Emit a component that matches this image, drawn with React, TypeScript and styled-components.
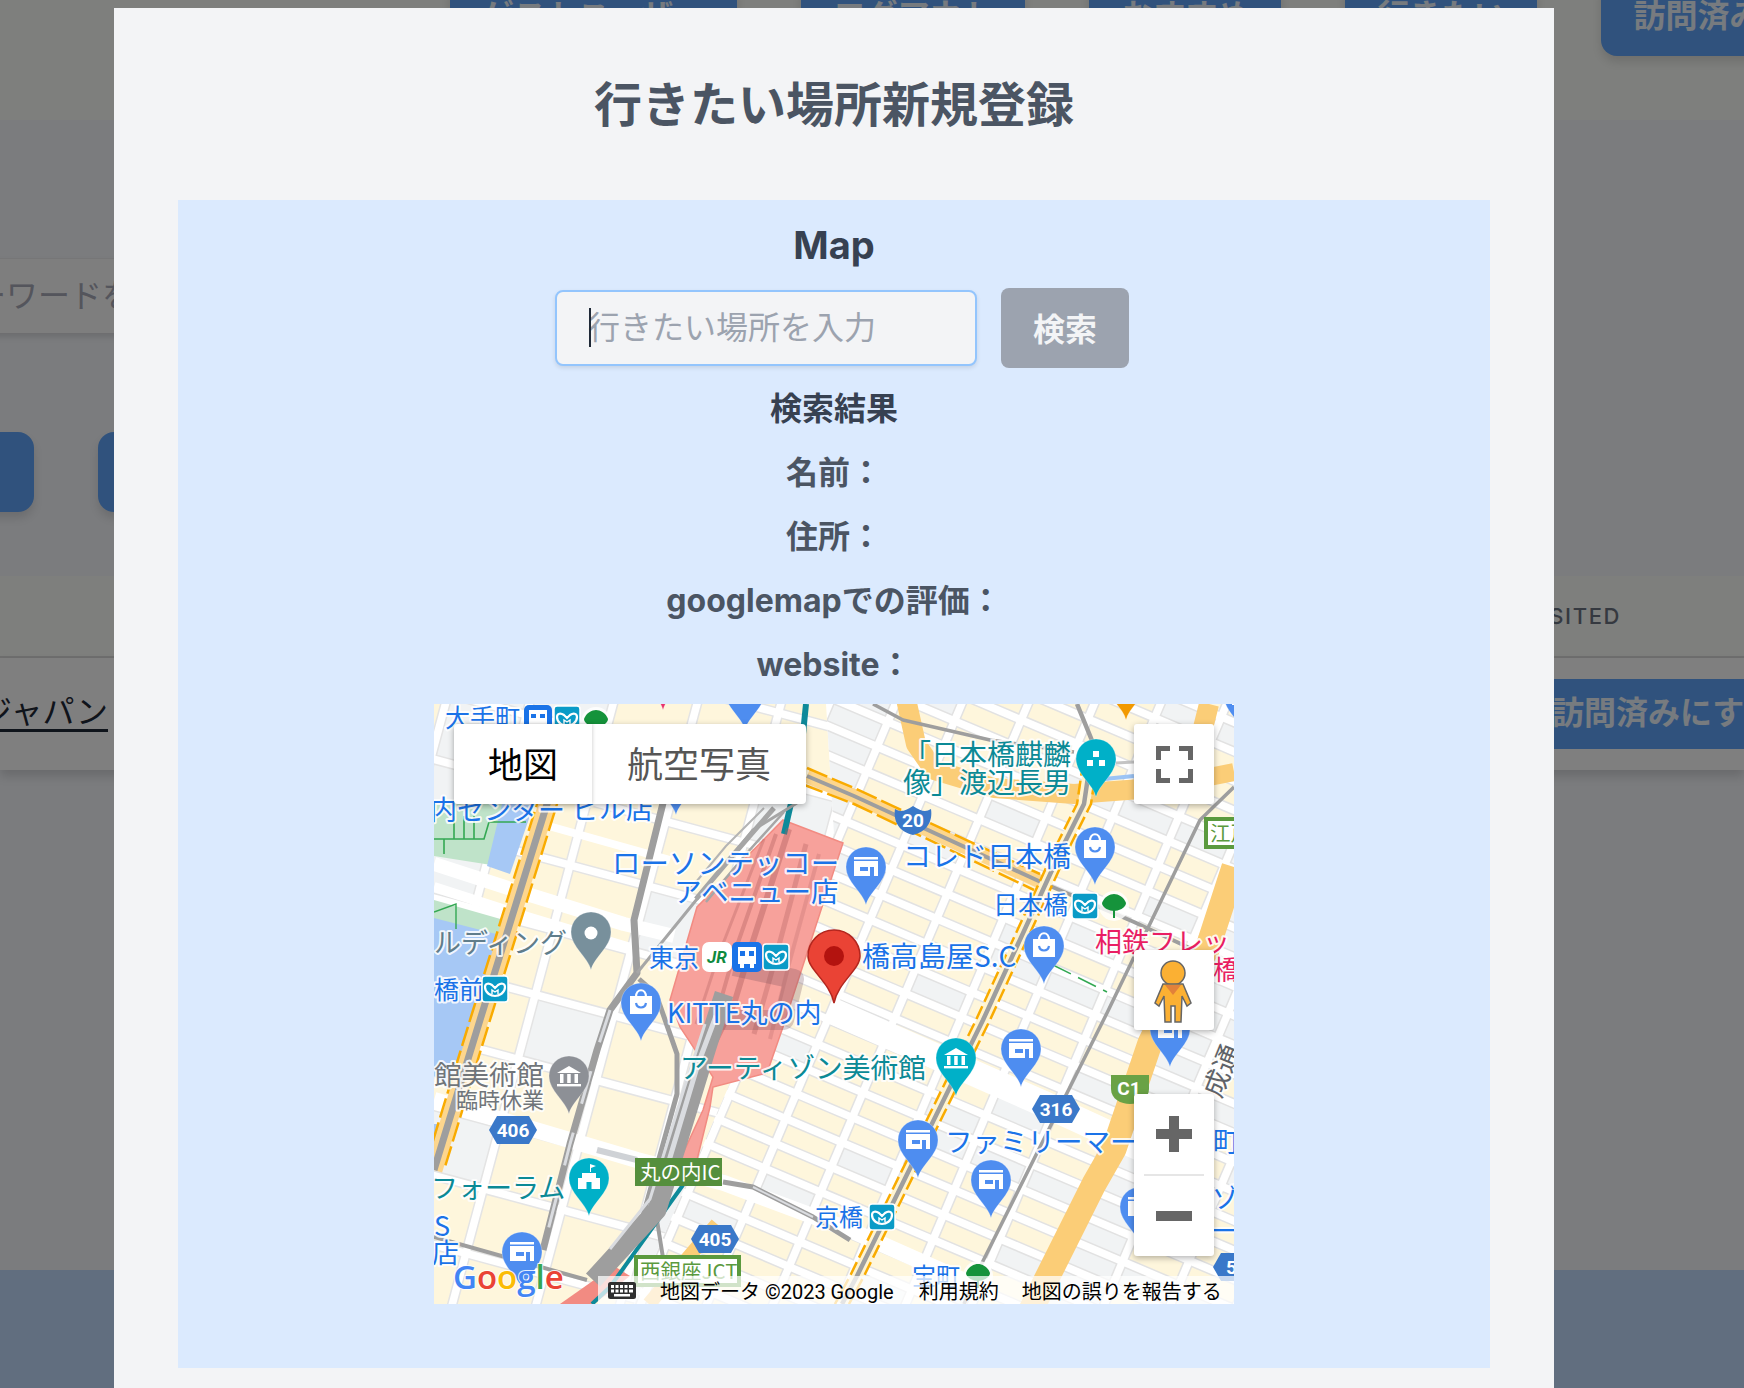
import styled, { createGlobalStyle } from "styled-components"

const FONT = `Inter, "Noto Sans CJK JP", sans-serif`
const MAP_FONT = `Roboto, "Noto Sans CJK JP", sans-serif`
const LABEL_FONT = `"Noto Sans CJK JP", sans-serif`

const GlobalStyle = createGlobalStyle`
  html, body { margin: 0; padding: 0; }
  body { font-family: ${FONT}; background: #f6f8fc; }
`

// Page behind the modal
const Page = styled.div`
  position: relative;
  width: 1744px;
  height: 1388px;
  overflow: hidden;
  display: flex;
  flex-direction: column;
`
const Header = styled.header`
  height: 120px;
  background: #fcfefa;
  display: flex;
  gap: 64px;
  padding-left: 450px;
  flex-shrink: 0;
`
const BlueButton = styled.button`
  height: 80px;
  margin-top: -24px;
  padding: 0 32px 6px;
  border: none;
  border-radius: 16px;
  background: #60a5fa;
  color: #eef6ff;
  font: 700 32px ${FONT};
  white-space: nowrap;
  flex-shrink: 0;
  box-shadow: 0 6px 10px rgba(0, 0, 0, 0.12);
`
const Main = styled.main`
  flex: 1;
  background: #f6f8fc;
`
const SearchBox = styled.div`
  margin: 138px 0 0 -58px;
  width: 900px;
  height: 75px;
  box-sizing: border-box;
  padding-bottom: 6px;
  background: #fdfdfd;
  border-top: 1px solid #ecedef;
  box-shadow: 0 4px 6px rgba(0, 0, 0, 0.12);
  display: flex;
  align-items: center;
  font-size: 32px;
  color: #a8aab8;
`
const ButtonRow = styled.div`
  margin: 99px 0 0 -166px;
  display: flex;
  gap: 64px;
`
const RoundButton = styled.div`
  width: 200px;
  height: 80px;
  box-sizing: border-box;
  padding: 0 32px;
  border-radius: 16px;
  background: #60a5fa;
  color: #eef6ff;
  font-size: 32px;
  font-weight: 700;
  white-space: nowrap;
  display: flex;
  align-items: center;
  justify-content: flex-end;
  box-shadow: 0 6px 10px rgba(0, 0, 0, 0.12);
`
const TableHead = styled.div`
  margin-top: 64px;
  height: 80px;
  background: #fcfefa;
  border-bottom: 2px solid #dcdcdc;
  display: flex;
  align-items: center;
  justify-content: flex-end;
  padding-right: 123px;
  font-size: 22px;
  font-weight: 500;
  letter-spacing: 1.6px;
  color: #6b7280;
`
const TableRow = styled.div`
  height: 112px;
  background: #fff;
  display: flex;
  align-items: center;
  justify-content: space-between;
  box-shadow: 0 6px 10px rgba(0, 0, 0, 0.15);
`
const PlaceLink = styled.a`
  margin: 0 0 10px -20px;
  font-size: 32px;
  color: #1f2937;
  text-decoration: underline;
  text-underline-offset: 6px;
`
const VisitButton = styled.button`
  height: 70px;
  width: 288px;
  margin-right: -64px;
  padding: 0 32px 8px;
  border: none;
  background: #60a5fa;
  color: #eef6ff;
  font: 700 32px ${FONT};
  white-space: nowrap;
  text-align: left;
`
const Footer = styled.footer`
  height: 118px;
  background: #bfdbfe;
  flex-shrink: 0;
`
const Overlay = styled.div`
  position: absolute;
  inset: 0;
  background: rgba(0, 0, 0, 0.5);
`
const FooterTint = styled.div`
  position: absolute;
  left: 0;
  right: 0;
  bottom: 0;
  height: 118px;
  background: #616e7f;
`

// Modal
const Modal = styled.div`
  position: absolute;
  left: 114px;
  top: 8px;
  width: 1440px;
  height: 1380px;
  box-sizing: border-box;
  background: #f3f4f6;
  padding: 64px 64px 0;
`
const Title = styled.h1`
  margin: 0 0 62px;
  line-height: 66px;
  font-size: 48px;
  font-weight: 700;
  text-align: center;
  color: #4b5563;
`
const Panel = styled.section`
  background: #dbeafe;
  height: 1168px;
  box-sizing: border-box;
  padding-top: 17px;
`
const PanelTitle = styled.h2`
  margin: 0 0 15px;
  line-height: 56px;
  font-size: 38px;
  font-weight: 700;
  text-align: center;
  color: #374151;
`
const SearchRow = styled.div`
  display: flex;
  justify-content: center;
  align-items: center;
  gap: 24px;
  padding-left: 16px;
  margin-bottom: 17px;
`
const InputWrap = styled.div`
  position: relative;
  width: 422px;
  height: 76px;
`
const PlaceInput = styled.input`
  width: 100%;
  height: 100%;
  box-sizing: border-box;
  border: 2px solid #93c5fd;
  border-radius: 8px;
  outline: none;
  background: #f3f4f6;
  padding: 0 31px 2px;
  font: 400 32px ${FONT};
  box-shadow: 0 2px 4px rgba(0, 0, 0, 0.1);
  &::placeholder { color: #9ca3af; opacity: 1; }
`
const Caret = styled.span`
  position: absolute;
  left: 34px;
  top: 18px;
  width: 2px;
  height: 39px;
  background: #1f2937;
`
const SearchButton = styled.button`
  width: 128px;
  height: 80px;
  padding: 0 0 2px;
  border: none;
  border-radius: 8px;
  background: #9ca3af;
  color: #f3f4f6;
  font: 700 32px ${FONT};
`
const ResultLine = styled.p<{ $strong?: boolean }>`
  margin: 0 0 16px;
  line-height: 48px;
  font-size: 32px;
  font-weight: 700;
  text-align: center;
  color: ${p => p.$strong ? '#374151' : '#4b5563'};
`

// Google map
const MapBox = styled.div`
  position: relative;
  width: 800px;
  height: 600px;
  margin: -1px auto 0;
  overflow: hidden;
  background: #fff;
`
const MapCanvas = styled.svg`
  display: block;
`
const MapText = styled.text<{ $fill: string; $size: number }>`
  font-family: ${LABEL_FONT};
  font-size: ${p => p.$size}px;
  fill: ${p => p.$fill};
  stroke: #fff;
  stroke-width: 4px;
  stroke-opacity: 0.85;
  stroke-linejoin: round;
  paint-order: stroke;
  dominant-baseline: central;
`
const SignText = styled(MapText)`
  stroke: none;
`
const LogoText = styled(MapText)`
  font-family: "Open Sans", sans-serif;
  font-weight: 600;
  stroke-width: 2px;
`
const ShieldText = styled.text<{ $fill?: string; $size?: number; $italic?: boolean }>`
  font-family: Roboto, sans-serif;
  font-size: ${p => p.$size || 19}px;
  font-style: ${p => p.$italic ? 'italic' : 'normal'};
  font-weight: 700;
  fill: ${p => p.$fill || '#fff'};
  text-anchor: middle;
  dominant-baseline: central;
`
const MapLine = styled.polyline<{ $color: string; $width: number; $dash?: string }>`
  fill: none;
  stroke: ${p => p.$color};
  stroke-width: ${p => p.$width}px;
  stroke-dasharray: ${p => p.$dash || 'none'};
  stroke-linejoin: round;
`
const TypeControl = styled.div`
  position: absolute;
  left: 20px;
  top: 20px;
  width: 352px;
  height: 80px;
  display: flex;
  background: #fff;
  border-radius: 4px;
  box-shadow: 0 2px 6px rgba(0, 0, 0, 0.3);
`
const TypeButton = styled.div<{ $active?: boolean; $width: number }>`
  width: ${p => p.$width}px;
  box-sizing: border-box;
  padding-bottom: 4px;
  display: flex;
  align-items: center;
  justify-content: center;
  font: 400 ${p => p.$active ? 35 : 36}px ${MAP_FONT};
  color: ${p => p.$active ? '#000' : '#565656'};
  box-shadow: ${p => p.$active ? '1px 0 3px rgba(0, 0, 0, 0.15)' : 'none'};
`
const MapControl = styled.div<{ $top: number; $height?: number }>`
  position: absolute;
  left: 700px;
  top: ${p => p.$top}px;
  width: 80px;
  height: ${p => p.$height || 80}px;
  background: #fff;
  border-radius: 3px;
  box-shadow: 0 2px 6px rgba(0, 0, 0, 0.3);
  display: flex;
  flex-direction: column;
  align-items: center;
  justify-content: center;
`
const ZoomStep = styled.div`
  flex: 1;
  display: flex;
  align-items: center;
  justify-content: center;
`
const ZoomDivider = styled.div`
  width: 60px;
  height: 2px;
  background: #e6e6e6;
`
const Attribution = styled.div`
  position: absolute;
  right: 0;
  bottom: 0;
  left: 164px;
  height: 28px;
  display: flex;
  align-items: center;
  background: rgba(255, 255, 255, 0.72);
  font: 400 20px ${MAP_FONT};
  color: #000;
  white-space: nowrap;
`
const AttributionText = styled.span<{ $left: number }>`
  margin-left: ${p => p.$left}px;
`
const KeyboardSvg = styled.svg`
  margin-left: 10px;
  flex-shrink: 0;
`

// Map data
const streetBlocks = (cols: number[], rows: number[], w: number, h: number, gapX: number, gapY: number, grayShare: number) => {
  const list: { x: number; y: number; w: number; h: number; gray: boolean }[] = []
  for (let i = cols[0]; i < cols[1]; i++) {
    for (let j = rows[0]; j < rows[1]; j++) {
      const hash = Math.abs(i * i * 3 + j * 7 + i * j * 5)
      list.push({ x: i * (w + gapX), y: j * (h + gapY), w, h, gray: hash % 7 < grayShare + (i > 3 ? 1 : 0) })
    }
  }
  return list
}
const eastBlocks = streetBlocks([-10, 18], [-13, 36], 52, 18, 9, 9, 1)
const westBlocks = streetBlocks([-3, 7], [-4, 10], 72, 58, 9, 9, 1)

const ROADS: { p: string; c: string; w: number; d?: string }[] = [
  { p: "396,306 610,400 730,455", c: "#ffffff", w: 26 },
  { p: "0,160 80,186 190,220 240,232", c: "#ffffff", w: 14 },
  { p: "0,183 90,212 200,245", c: "#ffffff", w: 10 },
  { p: "0,396 203,456 290,479 416,526 560,590", c: "#ffffff", w: 16 },
  { p: "111,121 236,156", c: "#ffffff", w: 8 },
  { p: "472,-5 482,40 500,66 560,84 640,90 720,84 760,60 775,0", c: "#fbcd77", w: 20 },
  { p: "720,84 800,68", c: "#fbcd77", w: 18 },
  { p: "660,76 700,72", c: "#9cc4f5", w: 4 },
  { p: "595,610 660,480 680,445 716,339 745,280 773,246 800,163", c: "#fbcd77", w: 25 },
  { p: "283,520 240,570 215,600", c: "#fbcd77", w: 14 },
  { p: "373,72 420,92 609,179", c: "#fdd68d", w: 14 },
  { p: "373,64 420,84 606,170", c: "#f9ab00", w: 2.5, d: "22 5" },
  { p: "368,80 420,100 600,186", c: "#f9ab00", w: 2.5, d: "22 5" },
  { p: "373,72 420,92 609,179 700,218 760,246", c: "#9e9e9e", w: 4 },
  { p: "125,60 113,100 46,316 0,466", c: "#fdd68d", w: 17 },
  { p: "135,60 123,100 56,316 10,466", c: "#f9ab00", w: 2.5, d: "20 5" },
  { p: "115,60 103,100 36,316 -10,466", c: "#f9ab00", w: 2.5, d: "20 5" },
  { p: "125,60 113,100 46,316 0,466", c: "#9e9e9e", w: 7 },
  { p: "659,39 650,100 630,140 549,316 423,572 408,600", c: "#fff4d0", w: 12 },
  { p: "666,39 657,100 637,140 556,316 430,572 415,600", c: "#f9ab00", w: 2.5, d: "14 5" },
  { p: "652,39 643,100 623,140 542,316 416,572 401,600", c: "#f9ab00", w: 2.5, d: "14 5" },
  { p: "643,0 659,39 650,100 630,140 549,316 423,572 408,600", c: "#9e9e9e", w: 4.5 },
  { p: "800,83 766,116 673,309 546,563 530,600", c: "#9e9e9e", w: 3.5 },
  { p: "439,0 469,16 556,36 640,48", c: "#9e9e9e", w: 3.5 },
  { p: "682,59 700,58", c: "#c4c4c4", w: 3 },
  { p: "619,261 673,288", c: "#34a853", w: 1.5, d: "20 8" },
  { p: "229,99 200,216 203,269 176,306 163,346 136,440 109,546", c: "#9e9e9e", w: 7 },
  { p: "176,306 163,346 136,440 109,546", c: "#dadce0", w: 3, d: "34 30" },
  { p: "205,275 222,290 243,350 243,390 209,512", c: "#9e9e9e", w: 5 },
  { p: "0,533 153,576", c: "#9e9e9e", w: 4 },
  { p: "222,510 230,560", c: "#9e9e9e", w: 4 },
  { p: "163,446 203,456", c: "#cfd2d6", w: 6 },
  { p: "289,478 319,483 379,513 416,536", c: "#9e9e9e", w: 5 },
  { p: "319,483 379,513", c: "#dadce0", w: 2 },
  { p: "372,0 366,60 350,130", c: "#0e8a9a", w: 6 },
  { p: "249,481 176,583 158,600", c: "#0e8a9a", w: 4 },
]
const STATION_RAILS: { p: string; c: string; w: number }[] = [
  { p: "363,99 319,126 203,269", c: "#a6a6a6", w: 3 },
  { p: "340,104 300,150 262,195", c: "#a6a6a6", w: 5 },
  { p: "350,108 312,150 272,198", c: "#a6a6a6", w: 2.5 },
  { p: "330,104 292,142 252,190", c: "#b4b4b4", w: 2 },
  { p: "355,125 318,240 300,300 270,360", c: "rgba(170,90,90,0.4)", w: 6 },
  { p: "342,130 300,250 280,320 258,360", c: "rgba(170,90,90,0.35)", w: 4 },
  { p: "330,135 285,250 262,320", c: "rgba(170,90,90,0.3)", w: 3 },
  { p: "372,140 340,260 320,330", c: "rgba(170,90,90,0.3)", w: 5 },
  { p: "385,150 355,260 336,335", c: "rgba(170,90,90,0.22)", w: 4 },
  { p: "300,262 360,275 350,316 280,316", c: "rgba(120,80,90,0.28)", w: 20 },
  { p: "290,290 273,343 223,506 159,576", c: "#9e9e9e", w: 19 },
  { p: "282,312 264,360 228,480", c: "#dadce0", w: 5 },
  { p: "271,320 250,385 216,495 176,545", c: "#dadce0", w: 3 },
]

type LabelData = [string, number, number, number, string]
const BLUE = "#1a73e8"
const TEAL = "#0b8a96"
const GRAY = "#70757a"
const PINK = "#e91e63"
const LABELS: LabelData[] = [
  ["大手町", 11, 12, 25, BLUE],
  ["内センター", -4, 104, 27, BLUE],
  ["ビル店", 138, 103, 27, BLUE],
  ["ローソンテッコー", 178, 157, 28.4, BLUE],
  ["アベニュー店", 240, 186, 27.5, BLUE],
  ["ルディング", 0, 237, 27, "#607d8b"],
  ["橋前", 0, 284, 25, BLUE],
  ["東京", 215, 252, 25, BLUE],
  ["橋高島屋S.C", 428, 251, 28, BLUE],
  ["KITTE丸の内", 233, 307, 27, BLUE],
  ["アーティゾン美術館", 246, 362, 27.7, TEAL],
  ["館美術館", 0, 369, 27.5, GRAY],
  ["臨時休業", 22, 394, 22, GRAY],
  ["フォーラム", -3, 482, 27, TEAL],
  ["S", 0, 520, 27, BLUE],
  ["店", -2, 547, 27, BLUE],
  ["京橋", 381, 511, 24, BLUE],
  ["ファミリーマート", 511, 436, 27.5, BLUE],
  ["日本橋", 559, 199, 25, BLUE],
  ["コレド日本橋", 469, 151, 28, BLUE],
  ["「日本橋麒麟", 469, 49, 28, TEAL],
  ["像」渡辺長男", 469, 77, 28, TEAL],
  ["相鉄フレッ", 661, 236, 27, PINK],
  ["橋", 779, 264, 27, PINK],
  ["宝町", 478, 570, 24, BLUE],
  ["町", 779, 436, 27, BLUE],
  ["ゾン", 778, 492, 27, BLUE],
  ["一場", 778, 525, 27, BLUE],
]

type PinIcon = "store" | "bag" | "dots" | "dot" | "museum" | "castle" | "none"
const STORE_BLUE = "#4e8df0"
const PIN_TEAL = "#00b0c8"
const PINS: { cx: number; top: number; color: string; icon: PinIcon }[] = [
  { cx: 432, top: 143, color: STORE_BLUE, icon: "store" },
  { cx: 661, top: 123, color: STORE_BLUE, icon: "bag" },
  { cx: 610, top: 222, color: STORE_BLUE, icon: "bag" },
  { cx: 207, top: 279, color: STORE_BLUE, icon: "bag" },
  { cx: 662, top: 35, color: PIN_TEAL, icon: "dots" },
  { cx: 157, top: 208, color: "#78909c", icon: "dot" },
  { cx: 135, top: 352, color: "#8d9096", icon: "museum" },
  { cx: 155, top: 454, color: PIN_TEAL, icon: "castle" },
  { cx: 522, top: 334, color: PIN_TEAL, icon: "museum" },
  { cx: 587, top: 325, color: STORE_BLUE, icon: "store" },
  { cx: 484, top: 416, color: STORE_BLUE, icon: "store" },
  { cx: 557, top: 456, color: STORE_BLUE, icon: "store" },
  { cx: 736, top: 305, color: STORE_BLUE, icon: "store" },
  { cx: 706, top: 483, color: STORE_BLUE, icon: "store" },
  { cx: 88, top: 528, color: STORE_BLUE, icon: "store" },
  { cx: 311, top: -32, color: STORE_BLUE, icon: "store" },
  { cx: 242, top: 53, color: STORE_BLUE, icon: "none" },
  { cx: 229, top: -52, color: "#e8336d", icon: "none" },
  { cx: 692, top: -42, color: "#f29900", icon: "none" },
  { cx: 810, top: -28, color: STORE_BLUE, icon: "store" },
]

const PinGlyph = ({ icon, color }: { icon: PinIcon; color: string }) => {
  if (icon === "store") return (
    <g fill="#fff">
      <rect x="-12" y="10" width="24" height="2.5" />
      <path d="M-12 14h24v15h-24z" />
      <rect x="-6" y="20" width="8" height="4" fill={color} />
      <rect x="4" y="20" width="4" height="9" fill={color} />
    </g>
  )
  if (icon === "bag") return (
    <g>
      <path d="M-11 13h22v18h-22z" fill="#fff" />
      <path d="M-5 14c0-9 10-9 10 0" fill="none" stroke="#fff" strokeWidth="2.2" />
      <path d="M-5 20c1 6 9 6 10 0" fill="none" stroke={color} strokeWidth="2.2" />
    </g>
  )
  if (icon === "dots") return (
    <g fill="#fff">
      <rect x="-3" y="12" width="6" height="6" />
      <rect x="-9" y="21" width="6" height="6" />
      <rect x="3" y="21" width="6" height="6" />
    </g>
  )
  if (icon === "dot") return <circle cx="0" cy="21" r="6.5" fill="#fff" />
  if (icon === "museum") return (
    <g fill="#fff">
      <path d="M0 10l12 7h-24z" />
      <path d="M-9 18h3.500v9h-3.500zM-1.800 18h3.500v9h-3.500zM5.500 18h3.500v9h-3.500z" />
      <rect x="-12" y="28" width="24" height="2.4" />
    </g>
  )
  if (icon === "castle") return (
    <g fill="#fff">
      <path d="M1 6v8h1v-4l5-2z" />
      <path d="M-7 15h14v5h4v11h-22v-11h4z" />
      <rect x="-2.5" y="24" width="5" height="7" fill={color} />
    </g>
  )
  return null
}

const MapPin = ({ cx, top, color, icon }: { cx: number; top: number; color: string; icon: PinIcon }) => (
  <g transform={`translate(${cx} ${top})`}>
    <path d="M0 58C-3 45-20 35-20 20A20 20 0 1 1 20 20C20 35 3 45 0 58Z" fill={color} stroke="#fff" strokeOpacity="0.25" />
    <PinGlyph icon={icon} color={color} />
  </g>
)

const MetroIcon = ({ x, y }: { x: number; y: number }) => (
  <g transform={`translate(${x} ${y})`}>
    <rect x="-13" y="-13" width="26" height="26" rx="3" fill="#0a9bc7" stroke="#fff" strokeWidth="1.5" />
    <path d="M0 7C-4 7-10 4-10-2-10-6-6-6-3-4L0-1 3-4C6-6 10-6 10-2 10 4 4 7 0 7Z" fill="none" stroke="#fff" strokeWidth="2.2" />
    <path d="M-3 5V1L0 3 3 1V5" fill="none" stroke="#fff" strokeWidth="1.4" />
  </g>
)
const TreeIcon = ({ x, y }: { x: number; y: number }) => (
  <g transform={`translate(${x} ${y})`}>
    <circle r="15" fill="#fff" opacity="0.8" />
    <path d="M0 5C4 5 12 2 12-3 10-9 4-12 0-12S-10-9-12-3C-12 2-4 5 0 5Z" fill="#15933b" />
    <rect x="-1" y="3" width="2" height="9" fill="#15933b" />
  </g>
)
const HexShield = ({ x, y, label }: { x: number; y: number; label: string }) => (
  <g transform={`translate(${x} ${y})`}>
    <path d="M-24 0L-16-14H16L24 0 16 14H-16Z" fill="#3a78c9" />
    <ShieldText>{label}</ShieldText>
  </g>
)

const MapDrawing = () => (
  <MapCanvas width="800" height="600" viewBox="0 0 800 600">
    <defs>
      <clipPath id="east-zone">
        <path d="M392 0H800V600H200L300 370 400 130Z" />
      </clipPath>
    </defs>
    <rect width="800" height="600" fill="#ffffff" />
    <g transform="translate(0 60) rotate(15)">
      {westBlocks.map((b, i) => (
        <rect key={i} x={b.x} y={b.y} width={b.w} height={b.h} fill={b.gray ? "#f1f3f4" : "#fef6dc"} stroke="#e4e4e4" strokeWidth="1.5" />
      ))}
    </g>
    <g clipPath="url(#east-zone)">
      <rect width="800" height="600" fill="#ffffff" />
      <g transform="translate(400 0) rotate(23)">
        {eastBlocks.map((b, i) => (
          <rect key={i} x={b.x} y={b.y} width={b.w} height={b.h} fill={b.gray ? "#f1f3f4" : "#fef6dc"} stroke="#e2e2e2" strokeWidth="1.5" />
        ))}
      </g>
    </g>
    <path d="M0 100H80L70 163 0 152Z" fill="#bfe3c9" />
    <path d="M0 196L70 216 60 248 0 226Z" fill="#bfe3c9" />
    <path d="M68 100H100L76 170 53 162Z" fill="#a6c8f5" />
    <path d="M0 214L70 232 30 400 0 372Z" fill="#a6c8f5" />
    <path d="M0 420H10L4 448H0Z" fill="#a6c8f5" />
    <path d="M0 135H30V112M10 135V150M30 135H50L55 118H92M20 112V135M40 112V135" fill="none" stroke="#34a853" strokeWidth="1.6" />
    <path d="M0 208L22 200V225" fill="none" stroke="#34a853" strokeWidth="1.4" />
    <path d="M349 116L409 139 386 209 349 323 333 369 279 383 276 403 263 456 246 456 269 406 279 373 246 323 236 296 263 203Z" fill="#f7a19b" stroke="#f28b82" strokeWidth="1.5" />
    <path d="M180 562L126 600H160L196 572Z" fill="#f28b82" />
    {ROADS.map((r, i) => <MapLine key={i} points={r.p} $color={r.c} $width={r.w} $dash={r.d} />)}
    {STATION_RAILS.map((r, i) => <MapLine key={i} points={r.p} $color={r.c} $width={r.w} />)}

    <path d="M479 102C470 108 466 108 461 105 459 118 466 128 479 131 492 128 499 118 497 105 492 108 488 108 479 102Z" fill="#3a78c9" />
    <ShieldText x="479" y="116">20</ShieldText>
    <HexShield x={79} y={426} label="406" />
    <HexShield x={281} y={535} label="405" />
    <HexShield x={622} y={405} label="316" />
    <HexShield x={803} y={563} label="50" />
    <path d="M677 371H715V385C715 395 705 400 696 400 687 400 677 395 677 385Z" fill="#6aa245" />
    <ShieldText x="695" y="384">C1</ShieldText>

    <rect x="201" y="454" width="87" height="28" fill="#558f3d" />
    <SignText x="206" y="467" $fill="#fff" $size={20.5}>丸の内IC</SignText>
    <rect x="202" y="553" width="103" height="28" fill="#fff" stroke="#5b9a3e" strokeWidth="4" />
    <SignText x="206" y="566" $fill="#5b9a3e" $size={20.5}>西銀座JCT</SignText>
    <rect x="772" y="115" width="40" height="28" fill="#fff" stroke="#5b9a3e" strokeWidth="4" />
    <SignText x="776" y="128" $fill="#5b9a3e" $size={20.5}>江戸</SignText>

    {PINS.map((pin, i) => <MapPin key={i} {...pin} />)}
    {LABELS.map(([text, x, y, size, color]) => (
      <MapText key={text + x} x={x} y={y} $fill={color} $size={size}>{text}</MapText>
    ))}
    <MapText x="0" y="0" $fill="#5f6368" $size={27} transform="translate(786 366) rotate(-68)" textAnchor="middle">成通</MapText>

    <MetroIcon x={61} y={285} />
    <MetroIcon x={342} y={253} />
    <MetroIcon x={448} y={513} />
    <MetroIcon x={651} y={202} />
    <MetroIcon x={133} y={15} />
    <TreeIcon x={680} y={202} />
    <TreeIcon x={544} y={572} />
    <TreeIcon x={162} y={18} />
    <g transform="translate(283 253)">
      <rect x="-15" y="-15" width="30" height="30" rx="7" fill="#fff" />
      <ShieldText $fill="#0e8a3e" $size={17} $italic>JR</ShieldText>
    </g>
    <g transform="translate(313 253)">
      <rect x="-15" y="-15" width="30" height="30" rx="5" fill="#1a73e8" />
      <path d="M-9-10h18v17h-18z" fill="#fff" />
      <path d="M-7-6h5v5h-5zM2-6h5v5h-5z" fill="#1a73e8" />
      <path d="M-7 7h4v4h-4zM3 7h4v4h-4z" fill="#fff" />
    </g>
    <g transform="translate(104 15)">
      <rect x="-14" y="-14" width="28" height="28" rx="5" fill="#1a73e8" />
      <path d="M-9-9h18v14h-18z" fill="#fff" />
      <path d="M-7-5h5v4h-5zM2-5h5v4h-5z" fill="#1a73e8" />
    </g>

    <g transform="translate(400 226)">
      <path d="M0 73C-4 52-26 40-26 26A26 26 0 1 1 26 26C26 40 4 52 0 73Z" fill="#ea4335" stroke="#b3261e" strokeWidth="1.5" />
      <circle cx="0" cy="26" r="10" fill="#b3130f" />
    </g>

    <LogoText x="19" y="572" $fill="#4285f4" $size={33}>
      G<tspan fill="#ea4335">o</tspan><tspan fill="#fbbc05">o</tspan><tspan fill="#4285f4">g</tspan><tspan fill="#34a853">l</tspan><tspan fill="#ea4335">e</tspan>
    </LogoText>
  </MapCanvas>
)

const KeyboardIcon = () => (
  <KeyboardSvg width="28" height="17" viewBox="0 0 28 17">
    <rect width="28" height="17" rx="2.5" fill="#2f2f2f" />
    <path d="M3 3h3v3H3zM7.500 3h3v3h-3zM12 3h3v3h-3zM16.500 3h3v3h-3zM21 3h4v3h-4zM3 7.500h3v3H3zM7.500 7.500h3v3h-3zM12 7.500h3v3h-3zM16.500 7.500h3v3h-3zM21 7.500h4v3h-4zM6 12h16v2.500H6z" fill="#fff" />
  </KeyboardSvg>
)

const App: React.FC = () => {
  const results = ["名前：", "住所：", "googlemapでの評価：", "website："]

  return (
    <>
      <GlobalStyle />
      <Page>
        <Header>
          <BlueButton>ゲストユーザー</BlueButton>
          <BlueButton>ログアウト</BlueButton>
          <BlueButton>おすすめ</BlueButton>
          <BlueButton>行きたい</BlueButton>
          <BlueButton>訪問済み</BlueButton>
        </Header>
        <Main>
          <SearchBox>キーワードを入力</SearchBox>
          <ButtonRow>
            <RoundButton>すべて</RoundButton>
            <RoundButton>未訪問</RoundButton>
          </ButtonRow>
          <TableHead>VISITED</TableHead>
          <TableRow>
            <PlaceLink>ジャパン</PlaceLink>
            <VisitButton>訪問済みにする</VisitButton>
          </TableRow>
        </Main>
        <Footer />
        <Overlay />
        <FooterTint />

        <Modal>
          <Title>行きたい場所新規登録</Title>
          <Panel>
            <PanelTitle>Map</PanelTitle>
            <SearchRow>
              <InputWrap>
                <PlaceInput placeholder="行きたい場所を入力" readOnly />
                <Caret />
              </InputWrap>
              <SearchButton>検索</SearchButton>
            </SearchRow>
            <ResultLine $strong>検索結果</ResultLine>
            {results.map(el => <ResultLine key={el}>{el}</ResultLine>)}
            <MapBox>
              <MapDrawing />
              <TypeControl>
                <TypeButton $active $width={138}>地図</TypeButton>
                <TypeButton $width={214}>航空写真</TypeButton>
              </TypeControl>
              <MapControl $top={20}>
                <svg width="37" height="37" viewBox="0 0 37 37">
                  <path d="M2.500 14V2.500H14M23 2.500H34.500V14M2.500 23V34.500H14M34.500 23V34.500H23" fill="none" stroke="#666" strokeWidth="5" />
                </svg>
              </MapControl>
              <MapControl $top={246}>
                <svg width="80" height="80" viewBox="0 0 80 80">
                  <circle cx="39" cy="23" r="12" fill="#fbb033" stroke="#666" strokeWidth="1.5" />
                  <path d="M29 34H49L57 53 53 56 48 46 47 72H41V56H37V72H31L30 46 25 56 21 53Z" fill="#fbb033" stroke="#666" strokeWidth="1.5" />
                  <path d="M31 35H47L39 45Z" fill="#e2813a" />
                </svg>
              </MapControl>
              <MapControl $top={390} $height={162}>
                <ZoomStep>
                  <svg width="36" height="36" viewBox="0 0 36 36">
                    <path d="M13 0h10v13h13v10H23v13H13V23H0V13h13z" fill="#666" />
                  </svg>
                </ZoomStep>
                <ZoomDivider />
                <ZoomStep>
                  <svg width="36" height="10" viewBox="0 0 36 10">
                    <rect width="36" height="10" fill="#666" />
                  </svg>
                </ZoomStep>
              </MapControl>
              <Attribution>
                <KeyboardIcon />
                <AttributionText $left={24}>地図データ ©2023 Google</AttributionText>
                <AttributionText $left={25}>利用規約</AttributionText>
                <AttributionText $left={23}>地図の誤りを報告する</AttributionText>
              </Attribution>
            </MapBox>
          </Panel>
        </Modal>
      </Page>
    </>
  )
}

export default App
